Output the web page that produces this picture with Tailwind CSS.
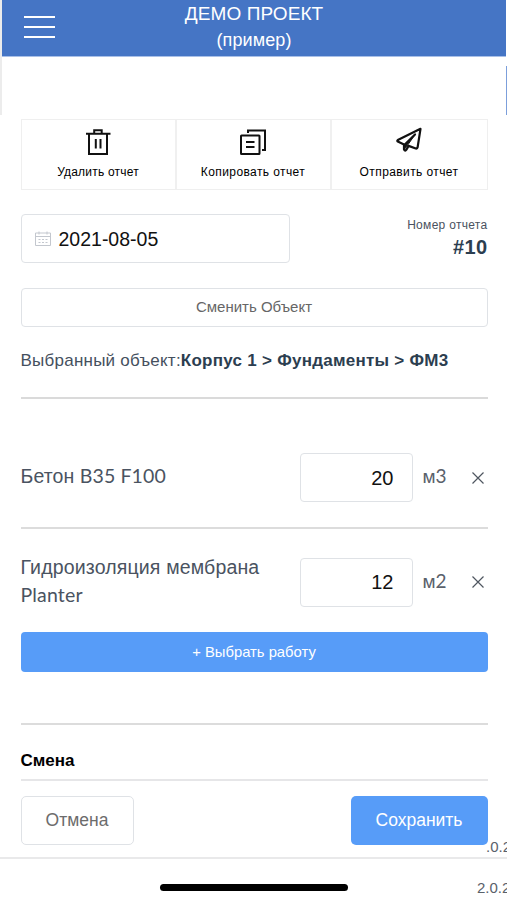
<!DOCTYPE html>
<html lang="ru">
<head>
<meta charset="utf-8">
<meta name="viewport" content="width=device-width, initial-scale=1">
<title>ДЕМО ПРОЕКТ</title>
<script src="https://cdn.jsdelivr.net/npm/@tailwindcss/browser@4"></script>
</head>
<body class="bg-white">
<div class="relative flex h-[900px] w-[507px] flex-col overflow-hidden bg-white font-['Liberation_Sans',Arial,sans-serif] text-[#2c3e50]">
  <div class="absolute left-0 top-0 h-[115px] w-[2px] bg-[#ececec]"></div>
  <div class="absolute left-[506px] top-[66px] h-[49px] w-px bg-[#7c9fdb]"></div>

  <header class="relative ml-[2px] mr-px flex h-[57px] shrink-0 justify-center border-b border-[#a9c0e8] bg-[#4575c5] text-white">
    <button class="absolute left-[22px] top-[16px] flex h-[22px] w-[31px] flex-col justify-between" aria-label="Меню">
      <span class="h-[2px] w-full bg-white"></span>
      <span class="h-[2px] w-full bg-white"></span>
      <span class="h-[2px] w-full bg-white"></span>
    </button>
    <div class="flex flex-col items-center">
      <h1 class="mt-px h-[26px] whitespace-nowrap text-[19px] leading-[26px] tracking-[0.1px]">ДЕМО ПРОЕКТ</h1>
      <p class="h-[26px] text-[18px] leading-[26px] tracking-[0.1px]">(пример)</p>
    </div>
  </header>

  <main class="flex flex-col pl-[20.500px] pr-[19.500px] pt-[62px]">
    <div class="grid h-[71px] grid-cols-3 border border-[#efefef] text-[12px] text-black">
      <div class="flex flex-col items-center border-r-2 border-[#f0f0f0] pt-[6px]">
        <svg class="h-[32px] w-[32px]" viewBox="0 0 32 32" fill="none" stroke="#111" stroke-width="2"><path d="M4 7.700h24.500M7 7.700V28h18V7.700M12.200 7V4.200h7.500V7M13.800 13v9.500M18.500 13v9.500"/></svg>
        <span class="mt-[6px] leading-[17px] tracking-[0.200px]">Удалить отчет</span>
      </div>
      <div class="flex flex-col items-center border-r-2 border-[#f0f0f0] pt-[6px]">
        <svg class="h-[32px] w-[32px]" viewBox="0 0 32 32" fill="none" stroke="#111" stroke-width="2"><rect x="4" y="9.500" width="18.500" height="18.500" rx=".5"/><path d="M11 7V4.500h17V24h-3M9 16h8.500M9 21h8.500"/></svg>
        <span class="mt-[6px] leading-[17px] tracking-[0.400px]">Копировать отчет</span>
      </div>
      <div class="flex flex-col items-center pt-[6px]">
        <svg class="h-[32px] w-[32px]" viewBox="0 0 32 32" fill="none" stroke="#111" stroke-width="2.200" stroke-linejoin="round" stroke-linecap="round"><path d="M27.500 2.800 4.800 14q-1 .8 0 1.600l6.200 3V23.500q1.200 2 2.400.2l2.200-3.800 7.200 2.600q1.500.3 1.800-1.200z"/><path d="M22 8.500 11.300 19"/><path d="M22 8.500 11.500 18.500l.8 3.500z" fill="#111" stroke-width="1"/></svg>
        <span class="mt-[6px] leading-[17px] tracking-[0.400px]">Отправить отчет</span>
      </div>
    </div>

    <div class="mt-[24px] flex h-[49px] items-start justify-between">
      <div class="flex h-[49px] w-[269px] items-center rounded-[4px] border border-[#dfe2e6] pl-[13px]">
        <svg class="h-[16px] w-[16px]" viewBox="0 0 16 16" fill="none" stroke="#c3c7ce"><path d="M.5 2h15v12.500H.5zM.5 5.500h15M4 .5v3M12 .5v3M3.500 8.500h2M7 8.500h2M10.500 8.500h2M3.500 11.500h2M7 11.500h2M10.500 11.500h2"/></svg>
        <span class="ml-[8px] mt-[2px] text-[19.500px] text-[#111]">2021-08-05</span>
      </div>
      <div class="flex flex-col items-end">
        <span class="mt-[2px] text-[12px] leading-[18px] tracking-[0.3px] text-[#4a5260]">Номер отчета</span>
        <span class="text-[20px] font-bold leading-[26px] tracking-[0.4px]">#10</span>
      </div>
    </div>

    <button class="mt-[25px] flex h-[39px] items-center justify-center rounded-[4px] border border-[#dfe2e6] text-[15px] text-[#666]">Сменить Объект</button>

    <p class="mt-[23px] flex h-[21px] items-center whitespace-nowrap text-[17px]"><span class="tracking-[0.240px] text-[#45505e]">Выбранный объект:</span><b class="tracking-[0.260px]">Корпус 1 &gt; Фундаменты &gt; ФМ3</b></p>

    <div class="mt-[26px] h-[2px] bg-[#dadada]"></div>

    <div class="mt-[54px] flex h-[49px] items-center">
      <span class="w-[279px] pb-[2px] text-[19.500px] tracking-[0.100px] text-[#4a5361]">Бетон <span class="font-['Lato',sans-serif]">B35 F100</span></span>
      <span class="flex h-[49px] w-[113px] items-center justify-end rounded-[4px] border border-[#dfe2e6] pr-[18px] text-[20px] text-[#111]">20</span>
      <span class="ml-[10px] w-[49px] pb-px text-[19px] text-[#5a616b]">м<span class="font-['Lato',sans-serif]">3</span></span>
      <svg class="h-[12px] w-[12px]" viewBox="0 0 12 12" stroke="#4f5660" stroke-width="1.200"><path d="m.5.5 11 11m0-11-11 11"/></svg>
    </div>

    <div class="mt-[25px] h-[2px] bg-[#dcdcdc]"></div>

    <div class="mt-[26px] flex h-[54px] items-center">
      <span class="w-[279px] pb-[2px] text-[19.500px] leading-[27px] tracking-[0.160px] text-[#4a5361]">Гидроизоляция мембрана<br><span class="font-['Lato',sans-serif]">Planter</span></span>
      <span class="flex h-[49px] w-[113px] items-center justify-end rounded-[4px] border border-[#dfe2e6] pr-[18px] text-[20px] text-[#111]">12</span>
      <span class="ml-[10px] w-[49px] text-[19px] text-[#5a616b]">м<span class="font-['Lato',sans-serif]">2</span></span>
      <svg class="h-[12px] w-[12px]" viewBox="0 0 12 12" stroke="#4f5660" stroke-width="1.200"><path d="m.5.5 11 11m0-11-11 11"/></svg>
    </div>

    <button class="mt-[23px] flex h-[40px] items-center justify-center rounded-[4px] bg-[#579cf8] text-[14.800px] text-white">+ Выбрать работу</button>

    <div class="mt-[51px] h-[2px] bg-[#dcdcdc]"></div>
    <h2 class="mt-[25px] h-[22px] text-[17px] font-bold leading-[22px] text-black">Смена</h2>
    <div class="mt-[7px] h-[2px] bg-[#e6e6e8]"></div>

    <div class="mt-[15px] flex h-[49px] justify-between text-[17.500px]">
      <button class="w-[113px] rounded-[5px] border border-[#dfe2e6] text-[#6c6c6c]">Отмена</button>
      <button class="w-[137px] rounded-[5px] bg-[#579cf8] text-white">Сохранить</button>
    </div>
  </main>

  <div class="absolute left-[486px] top-[838px] text-[15px] leading-[18px] text-[#5a616b]">.0.2</div>
  <footer class="relative mt-[12px] flex h-[43px] shrink-0 border-t-2 border-[#e9e9ea]">
    <div class="ml-[160px] mt-[25px] h-[7px] w-[188px] shrink-0 rounded-full bg-black"></div>
    <span class="ml-[129px] mt-[20px] whitespace-nowrap text-[15px] leading-[18px] text-[#5a616b]">2.0.2</span>
  </footer>
</div>
</body>
</html>
